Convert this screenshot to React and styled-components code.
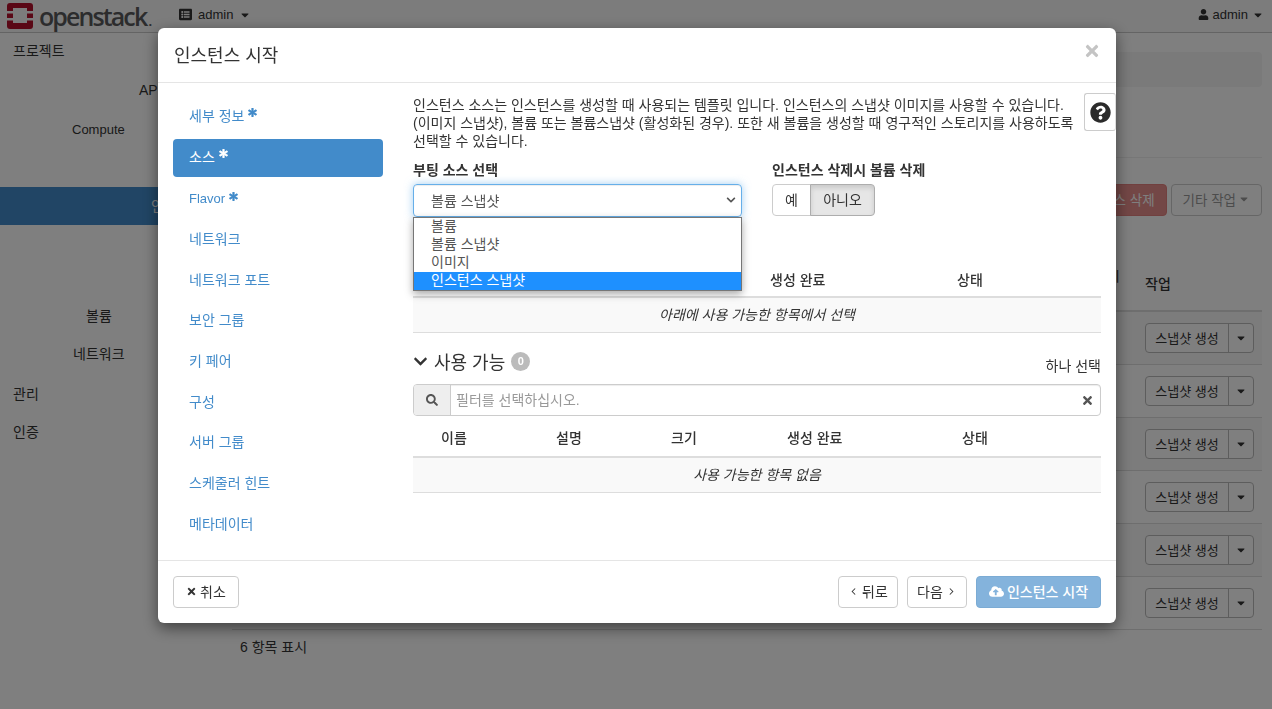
import React from "react"
import styled, { createGlobalStyle } from "styled-components"
import { ChevronLeft, ChevronRight } from "lucide-react"
import {
  FaAsterisk,
  FaCaretDown,
  FaChevronDown,
  FaCloudUploadAlt,
  FaListAlt,
  FaQuestionCircle,
  FaSearch,
  FaTimes,
  FaUser,
} from "react-icons/fa"

const fontStack = `"Liberation Sans", "Noto Sans CJK KR", sans-serif`

const GlobalStyle = createGlobalStyle`
  html, body {
    margin: 0;
    height: 100%;
    overflow: hidden;
    background: #fff;
    color: #333;
    font-family: ${fontStack};
    font-size: 14px;
  }
  * {
    box-sizing: border-box;
  }
`

const Navbar = styled.header`
  display: flex;
  align-items: center;
  height: 33px;
  padding: 0 8px 3px 7px;
  background: #f8f8f8;
  border-bottom: 1px solid #c8c8c8;
`

const Logo = styled.div`
  display: flex;
  align-items: center;
  gap: 6px;
  width: 172px;
  margin-top: 2px;
`

const Wordmark = styled.span`
  font-family: "Open Sans", sans-serif;
  font-size: 25px;
  font-weight: 600;
  letter-spacing: -1.9px;
  color: #58595b;
`

const WordmarkDot = styled.span`
  font-size: 15px;
  margin-left: 2px;
  letter-spacing: 0;
`

const NavMenu = styled.div`
  display: flex;
  align-items: center;
  gap: ${props => (props.$end ? "4px" : "6px")};
  font-size: 13px;
  color: #333;
  margin-left: ${props => (props.$end ? "auto" : "0")};
`

const Shell = styled.div`
  display: grid;
  grid-template-columns: 232px 1fr;
`

const SideMenu = styled.nav`
  display: flex;
  flex-direction: column;
`

const SideItem = styled.div`
  display: flex;
  align-items: center;
  height: ${props => props.$height}px;
  padding-left: ${props => props.$indent}px;
  padding-bottom: ${props => (props.$latin ? "1px" : "3px")};
  font-size: ${props => (props.$latin ? "13px" : "14px")};
  white-space: nowrap;
  color: ${props => (props.$active ? "#fff" : "#333")};
  background: ${props => (props.$active ? "#428bca" : "transparent")};
`

const Content = styled.main`
  padding: 19px 10px 0 0;
`

const Breadcrumb = styled.div`
  height: 35px;
  background: #f5f5f5;
  border-radius: 4px;
`

const PageHeader = styled.div`
  height: 71px;
  border-bottom: 1px solid #eee;
`

const Actions = styled.div`
  display: flex;
  justify-content: flex-end;
  gap: 4px;
  margin-top: 26px;
  height: 32px;
  font-size: 13.5px;
`

const ActionButton = styled.div`
  display: flex;
  align-items: center;
  gap: 2px;
  padding: 0 11px 2px;
  border-radius: 4px;
  color: ${props => (props.$danger ? "#fff" : "#999")};
  background: ${props => (props.$danger ? "#d9534f" : "transparent")};
  opacity: ${props => (props.$danger ? 0.65 : 1)};
  border: 1px solid ${props => (props.$danger ? "#d43f3a" : "#ccc")};
`

const TableHead = styled.div`
  display: flex;
  align-items: center;
  height: 64px;
  margin-top: 32px;
  border-bottom: 2px solid #ddd;
  padding-left: 913px;
  position: relative;
`

const HeadLabel = styled.span`
  font-weight: 500;
  margin-top: 8px;
`

const ClippedHead = styled.span`
  position: absolute;
  left: 875px;
  top: 17px;
`

const InstanceRow = styled.div`
  display: flex;
  align-items: center;
  height: 53px;
  padding-left: 913px;
  border-bottom: 1px solid #ddd;
  background: ${props => (props.$odd ? "#f9f9f9" : "transparent")};
`

const SplitButton = styled.div`
  display: flex;
  height: 30px;
  border: 1px solid #bbb;
  border-radius: 4px;
  background: #fff;
`

const SplitMain = styled.span`
  display: flex;
  align-items: center;
  justify-content: center;
  width: 83px;
  padding-bottom: 2px;
  font-size: 13px;
  white-space: nowrap;
  border-right: 1px solid #bbb;
`

const SplitCaret = styled.span`
  display: flex;
  align-items: center;
  justify-content: center;
  width: 24px;
`

const ItemCount = styled.div`
  padding: 6px 8px 0;
`

const Backdrop = styled.div`
  position: fixed;
  inset: 0;
  background: rgba(0, 0, 0, 0.5);
`

const Modal = styled.section`
  position: fixed;
  left: 158px;
  top: 28px;
  width: 958px;
  height: 595px;
  display: flex;
  flex-direction: column;
  background: #fff;
  border-radius: 6px;
  box-shadow: 0 5px 15px rgba(0, 0, 0, 0.5);
`

const ModalHeader = styled.div`
  display: flex;
  align-items: center;
  justify-content: space-between;
  flex: 0 0 55px;
  padding: 0 15px 0 16px;
  border-bottom: 1px solid #e5e5e5;
`

const ModalTitle = styled.h4`
  margin: 0 0 2px;
  font-size: 18px;
  font-weight: 400;
  color: #333;
`

const CloseIcon = styled(FaTimes)`
  color: #c4c4c4;
  font-size: 18px;
  margin-top: -8px;
`

const HelpButton = styled.div`
  position: absolute;
  right: 0;
  top: 65px;
  width: 32px;
  height: 38px;
  display: flex;
  align-items: center;
  justify-content: center;
  background: #fff;
  border: 1px solid #ccc;
  border-right-color: #ddd;
  border-radius: 3px;
  font-size: 21px;
  color: #2b2b2b;
`

const ModalBody = styled.div`
  flex: 1;
  display: flex;
  min-height: 0;
`

const StepList = styled.ul`
  list-style: none;
  margin: 0;
  padding: 15px 0 0 15px;
  flex: 0 0 240px;
  display: flex;
  flex-direction: column;
  gap: 2px;
`

const Step = styled.li`
  display: flex;
  align-items: center;
  gap: 4px;
  width: 210px;
  height: 38.7px;
  padding-left: 16px;
  padding-bottom: ${props => (props.$latin ? "0" : props.$required ? "5px" : "3px")};
  font-size: ${props => (props.$latin ? "13px" : "14px")};
  border-radius: 4px;
  color: ${props => (props.$active ? "#fff" : "#428bca")};
  background: ${props => (props.$active ? "#428bca" : "transparent")};
`

const Required = styled(FaAsterisk)`
  font-size: 9px;
  margin-top: -4px;
  stroke: currentColor;
  stroke-width: 40px;
`

const StepPane = styled.div`
  flex: 1;
  padding: 13px 15px 0 15px;
  min-width: 0;
`

const Intro = styled.p`
  margin: 0;
  line-height: 18px;
  white-space: nowrap;
`

const FieldRow = styled.div`
  display: flex;
  margin-top: 11px;
  gap: 30px;
`

const Field = styled.div`
  width: ${props => props.$width}px;
  position: relative;
`

const FieldLabel = styled.div`
  font-weight: 700;
  line-height: 18px;
  margin-bottom: 5px;
`

const SelectBox = styled.div`
  display: flex;
  align-items: center;
  justify-content: space-between;
  height: 33px;
  padding: 0 5px 2px 17px;
  color: #555;
  border: 1px solid #66afe9;
  border-radius: 4px;
  box-shadow: inset 0 1px 1px rgba(0, 0, 0, 0.075), 0 0 8px rgba(102, 175, 233, 0.6);
`

const SelectPopup = styled.ul`
  position: absolute;
  left: 0;
  top: 56px;
  width: 329px;
  margin: 0;
  padding: 0;
  list-style: none;
  background: #fff;
  border: 1px solid #767676;
  box-shadow: 0 3px 8px rgba(0, 0, 0, 0.35);
  z-index: 2;
`

const SelectOption = styled.li`
  height: 18px;
  line-height: 17px;
  padding-left: 17px;
  color: ${props => (props.$selected ? "#fff" : "#555")};
  background: ${props => (props.$selected ? "#1e90ff" : "#fff")};
`

const ToggleGroup = styled.div`
  display: flex;
  height: 32px;
`

const Toggle = styled.div`
  display: flex;
  align-items: center;
  justify-content: center;
  width: ${props => props.$width}px;
  padding-bottom: 2px;
  border: 1px solid ${props => (props.$active ? "#adadad" : "#ccc")};
  background: ${props => (props.$active ? "#e6e6e6" : "#fff")};
  box-shadow: ${props => (props.$active ? "inset 0 3px 5px rgba(0,0,0,.125)" : "none")};
  margin-left: ${props => (props.$active ? "-1px" : "0")};
  border-radius: ${props => (props.$active ? "0 4px 4px 0" : "4px 0 0 4px")};
`

const TableHeader = styled.div`
  display: grid;
  grid-template-columns: ${props => props.$columns};
  align-items: end;
  height: ${props => props.$height}px;
  margin-top: ${props => props.$top}px;
  padding-bottom: ${props => props.$bottom}px;
  border-bottom: 2px solid #ddd;
  font-weight: 500;
`

const EmptyRow = styled.div`
  display: flex;
  align-items: center;
  justify-content: center;
  height: 35px;
  padding-bottom: 3px;
  background: #f9f9f9;
  border-bottom: 1px solid #ddd;
  font-style: italic;
`

const SectionHead = styled.div`
  display: flex;
  align-items: center;
  justify-content: space-between;
  margin-top: 14px;
  height: 28px;
`

const SectionTitle = styled.div`
  display: flex;
  align-items: center;
  gap: 6px;
  font-size: 18px;
`

const Badge = styled.span`
  display: flex;
  align-items: center;
  justify-content: center;
  width: 19px;
  height: 19px;
  font-size: 11px;
  font-weight: 700;
  color: #fff;
  background: #bbb;
  border-radius: 10px;
`

const SectionHint = styled.span`
  padding-top: 8px;
`

const SearchBar = styled.div`
  display: flex;
  align-items: stretch;
  height: 32px;
  margin-top: 9px;
  border: 1px solid #ccc;
  border-radius: 4px;
  box-shadow: inset 0 1px 1px rgba(0, 0, 0, 0.075);
`

const SearchAddon = styled.span`
  display: flex;
  align-items: center;
  justify-content: center;
  width: 37px;
  color: #555;
  background: #eee;
  border-right: 1px solid #ccc;
  border-radius: 3px 0 0 3px;
`

const SearchText = styled.span`
  flex: 1;
  align-self: center;
  padding: 0 0 3px 5px;
  color: #999;
`

const SearchClear = styled(FaTimes)`
  align-self: center;
  margin-right: 6px;
  font-size: 13px;
  color: #555;
`

const ModalFooter = styled.div`
  display: flex;
  align-items: center;
  flex: 0 0 63px;
  gap: 9px;
  padding: 0 15px;
  border-top: 1px solid #e5e5e5;
`

const FooterButton = styled.div`
  display: flex;
  align-items: center;
  justify-content: center;
  gap: 3px;
  width: ${props => props.$width}px;
  height: 32px;
  padding-bottom: 2px;
  margin-left: ${props => (props.$push ? "auto" : "0")};
  border: 1px solid #ccc;
  border-radius: 4px;
  background: #fff;
  white-space: nowrap;
`

const LaunchButton = styled(FooterButton)`
  color: #fff;
  background: #428bca;
  border-color: #357ebd;
  opacity: 0.65;
  font-weight: 500;
`

// rows without a label sit fully behind the modal in the reference
const sideItems = [
  { label: "프로젝트", indent: 13, height: 37 },
  { label: "API 액세스", indent: 139, height: 40 },
  { label: "Compute", indent: 72, height: 39, latin: true },
  { label: "", indent: 0, height: 38 },
  { label: "인스턴스", indent: 151, height: 38, active: true },
  { label: "", indent: 0, height: 36 },
  { label: "", indent: 0, height: 37 },
  { label: "볼륨", indent: 86, height: 37 },
  { label: "네트워크", indent: 73, height: 39 },
  { label: "관리", indent: 13, height: 40 },
  { label: "인증", indent: 13, height: 36 },
]

const steps = [
  { label: "세부 정보", required: true },
  { label: "소스", required: true, active: true },
  { label: "Flavor", required: true, latin: true },
  { label: "네트워크" },
  { label: "네트워크 포트" },
  { label: "보안 그룹" },
  { label: "키 페어" },
  { label: "구성" },
  { label: "서버 그룹" },
  { label: "스케줄러 힌트" },
  { label: "메타데이터" },
]

const bootSources = ["볼륨", "볼륨 스냅샷", "이미지", "인스턴스 스냅샷"]

function LogoMark() {
  return (
    <svg width="26" height="26" viewBox="0 0 26 26">
      <rect width="26" height="26" rx="3" fill="#b5112d" />
      <rect x="6" y="5" width="14" height="15" fill="#f8f8f8" />
      <rect x="0" y="8" width="6" height="2.5" fill="#f8f8f8" />
      <rect x="0" y="15" width="6" height="2.5" fill="#f8f8f8" />
      <rect x="20" y="8" width="6" height="2.5" fill="#f8f8f8" />
      <rect x="20" y="15" width="6" height="2.5" fill="#f8f8f8" />
    </svg>
  )
}

function BackgroundPage() {
  return (
    <>
      <Navbar>
        <Logo>
          <LogoMark />
          <Wordmark>
            openstack<WordmarkDot>.</WordmarkDot>
          </Wordmark>
        </Logo>
        <NavMenu>
          <FaListAlt size={13} />
          admin
          <FaCaretDown size={12} />
        </NavMenu>
        <NavMenu $end>
          <FaUser size={11} />
          admin
          <FaCaretDown size={12} />
        </NavMenu>
      </Navbar>
      <Shell>
        <SideMenu>
          {sideItems.map((item, index) => (
            <SideItem
              key={index}
              $indent={item.indent}
              $height={item.height}
              $latin={item.latin}
              $active={item.active}
            >
              {item.label}
            </SideItem>
          ))}
        </SideMenu>
        <Content>
          <Breadcrumb />
          <PageHeader />
          <Actions>
            <ActionButton $danger>인스턴스 삭제</ActionButton>
            <ActionButton>
              기타 작업
              <FaCaretDown size={12} />
            </ActionButton>
          </Actions>
          <TableHead>
            <ClippedHead>시</ClippedHead>
            <HeadLabel>작업</HeadLabel>
          </TableHead>
          {[0, 1, 2, 3, 4, 5].map(index => (
            <InstanceRow key={index} $odd={index % 2 === 0}>
              <SplitButton>
                <SplitMain>스냅샷 생성</SplitMain>
                <SplitCaret>
                  <FaCaretDown size={12} />
                </SplitCaret>
              </SplitButton>
            </InstanceRow>
          ))}
          <ItemCount>6 항목 표시</ItemCount>
        </Content>
      </Shell>
    </>
  )
}

export default function App() {
  return (
    <>
      <GlobalStyle />
      <BackgroundPage />
      <Backdrop />
      <Modal>
        <ModalHeader>
          <ModalTitle>인스턴스 시작</ModalTitle>
          <CloseIcon />
        </ModalHeader>
        <HelpButton>
          <FaQuestionCircle />
        </HelpButton>
        <ModalBody>
          <StepList>
            {steps.map(step => (
              <Step key={step.label} $active={step.active} $latin={step.latin} $required={step.required}>
                {step.label}
                {step.required && <Required />}
              </Step>
            ))}
          </StepList>
          <StepPane>
            <Intro>
              인스턴스 소스는 인스턴스를 생성할 때 사용되는 템플릿 입니다. 인스턴스의 스냅샷 이미지를 사용할 수 있습니다.
              <br />
              (이미지 스냅샷), 볼륨 또는 볼륨스냅샷 (활성화된 경우). 또한 새 볼륨을 생성할 때 영구적인 스토리지를 사용하도록
              <br />
              선택할 수 있습니다.
            </Intro>
            <FieldRow>
              <Field $width={329}>
                <FieldLabel>부팅 소스 선택</FieldLabel>
                <SelectBox>
                  볼륨 스냅샷
                  <FaChevronDown size={10} color="#555" />
                </SelectBox>
                <SelectPopup>
                  {bootSources.map(source => (
                    <SelectOption key={source} $selected={source === "인스턴스 스냅샷"}>
                      {source}
                    </SelectOption>
                  ))}
                </SelectPopup>
              </Field>
              <Field $width={200}>
                <FieldLabel>인스턴스 삭제시 볼륨 삭제</FieldLabel>
                <ToggleGroup>
                  <Toggle $width={39}>예</Toggle>
                  <Toggle $width={65} $active>
                    아니오
                  </Toggle>
                </ToggleGroup>
              </Field>
            </FieldRow>
            <TableHeader $columns="357px 187px 1fr" $height={48} $top={33} $bottom={7}>
              <span />
              <span>생성 완료</span>
              <span>상태</span>
            </TableHeader>
            <EmptyRow>아래에 사용 가능한 항목에서 선택</EmptyRow>
            <SectionHead>
              <SectionTitle>
                <FaChevronDown size={15} color="#333" />
                사용 가능
                <Badge>0</Badge>
              </SectionTitle>
              <SectionHint>하나 선택</SectionHint>
            </SectionHead>
            <SearchBar>
              <SearchAddon>
                <FaSearch size={12} />
              </SearchAddon>
              <SearchText>필터를 선택하십시오.</SearchText>
              <SearchClear />
            </SearchBar>
            <TableHeader $columns="28px 115px 115px 116px 175px 1fr" $height={42} $top={0} $bottom={9}>
              <span />
              <span>이름</span>
              <span>설명</span>
              <span>크기</span>
              <span>생성 완료</span>
              <span>상태</span>
            </TableHeader>
            <EmptyRow>사용 가능한 항목 없음</EmptyRow>
          </StepPane>
        </ModalBody>
        <ModalFooter>
          <FooterButton $width={66}>
            <FaTimes size={11} />
            취소
          </FooterButton>
          <FooterButton $width={60} $push>
            <ChevronLeft size={11} strokeWidth={2.2} />
            뒤로
          </FooterButton>
          <FooterButton $width={60}>
            다음
            <ChevronRight size={11} strokeWidth={2.2} />
          </FooterButton>
          <LaunchButton $width={125}>
            <FaCloudUploadAlt size={15} />
            인스턴스 시작
          </LaunchButton>
        </ModalFooter>
      </Modal>
    </>
  )
}
